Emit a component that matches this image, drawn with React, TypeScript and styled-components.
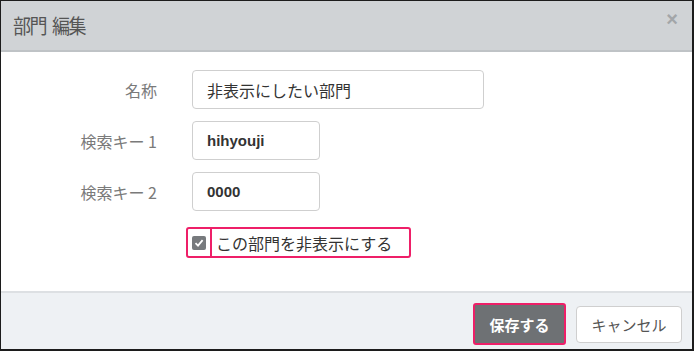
import styled, { createGlobalStyle } from "styled-components";

const GlobalStyle = createGlobalStyle`
  html, body {
    margin: 0;
    padding: 0;
    background: #ffffff;
  }
  body {
    font-family: "Noto Sans CJK JP", "Liberation Sans", sans-serif;
  }
`;

const fields = [
  { label: "名称", value: "非表示にしたい部門", wide: true },
  { label: "検索キー 1", value: "hihyouji", wide: false },
  { label: "検索キー 2", value: "0000", wide: false },
];

const App: React.FC = () => {
  return (
    <>
      <GlobalStyle />
      <Dialog>
        <Header>
          <Title>
            <span>部門</span>
            <span>編集</span>
          </Title>
          <Close>×</Close>
        </Header>
        <Body>
          <Form>
            {fields.map((f) => (
              <Row key={f.label}>
                <Label>{f.label}</Label>
                <Input $wide={f.wide} $latin={!f.wide}>
                  {f.value}
                </Input>
              </Row>
            ))}
            <Row>
              <span />
              <CheckRow>
                <CheckCell>
                  <CheckBox>
                    <svg width="10" height="10" viewBox="0 0 10 10">
                      <path
                        d="M1.5 5.2 L4 7.6 L8.6 2.2"
                        fill="none"
                        stroke="#fff"
                        strokeWidth="1.8"
                      />
                    </svg>
                  </CheckBox>
                </CheckCell>
                <CheckLabel>この部門を非表示にする</CheckLabel>
              </CheckRow>
            </Row>
          </Form>
        </Body>
        <Footer>
          <SaveButton>保存する</SaveButton>
          <CancelButton>キャンセル</CancelButton>
        </Footer>
      </Dialog>
    </>
  );
};

export default App;

const Dialog = styled.div`
  box-sizing: border-box;
  width: 694px;
  height: 351px;
  border: 1px solid #1c1c1c;
  border-right-width: 2px;
  border-bottom-width: 2px;
  display: flex;
  flex-direction: column;
  background: #fff;
`;

const Header = styled.div`
  box-sizing: border-box;
  height: 51px;
  background: #d0d3d6;
  border-bottom: 2px solid #bfc3c6;
  display: flex;
  align-items: center;
  justify-content: space-between;
  padding: 0 14px 2px 12px;
`;

const Title = styled.div`
  display: flex;
  gap: 6px;
  font-size: 18px;
  color: #555;
  letter-spacing: -1.5px;
  transform: scaleY(1.12);
`;

const Close = styled.div`
  font-family: "Liberation Sans", sans-serif;
  font-size: 20px;
  font-weight: bold;
  color: #a3a6a9;
  margin-top: -10px;
`;

const Body = styled.div`
  flex: 1;
  padding-top: 18px;
`;

const Form = styled.div`
  display: flex;
  flex-direction: column;
  gap: 12px;
`;

const Row = styled.div`
  display: grid;
  grid-template-columns: 156px 1fr;
  column-gap: 35px;
  align-items: center;
`;

const Label = styled.div`
  text-align: right;
  font-size: 16px;
  color: #7a7a7a;
  white-space: nowrap;
`;

const Input = styled.div<{ $wide: boolean; $latin: boolean }>`
  box-sizing: border-box;
  width: ${(p) => (p.$wide ? "292px" : "128px")};
  height: 39px;
  border: 1px solid #cfcfcf;
  border-radius: 4px;
  padding: 0 14px;
  display: flex;
  align-items: center;
  font-size: ${(p) => (p.$latin ? "15px" : "16px")};
  color: #333;
  font-family: ${(p) =>
    p.$latin
      ? `"Liberation Sans", "Noto Sans CJK JP", sans-serif`
      : `"Noto Sans CJK JP", sans-serif`};
  font-weight: ${(p) => (p.$latin ? 600 : 400)};
`;

const CheckRow = styled.div`
  margin-left: -6px;
  margin-top: 4px;
  box-sizing: border-box;
  width: 225px;
  height: 31px;
  border: 2px solid #ee1f68;
  border-radius: 3px;
  display: flex;
  align-items: stretch;
`;

const CheckCell = styled.div`
  width: 22px;
  border-right: 2px solid #ee1f68;
  display: flex;
  align-items: center;
  justify-content: center;
`;

const CheckBox = styled.div`
  width: 14px;
  height: 14px;
  border-radius: 2px;
  background: #777a7d;
  display: flex;
  align-items: center;
  justify-content: center;
`;

const CheckLabel = styled.div`
  font-size: 16px;
  color: #333;
  padding-left: 4px;
  display: flex;
  align-items: center;
`;

const Footer = styled.div`
  box-sizing: border-box;
  height: 58px;
  background: #eef1f4;
  border-top: 2px solid #dde0e3;
  display: flex;
  align-items: center;
  justify-content: flex-end;
  gap: 10px;
  padding: 6px 10px 0 0;
`;

const SaveButton = styled.div`
  box-sizing: border-box;
  width: 93px;
  height: 42px;
  border: 2px solid #ee1f68;
  border-radius: 3px;
  background: #6e7174;
  color: #fff;
  font-weight: bold;
  font-size: 15px;
  display: flex;
  align-items: center;
  justify-content: center;
`;

const CancelButton = styled.div`
  box-sizing: border-box;
  width: 106px;
  height: 37px;
  border: 1px solid #cfcfcf;
  border-radius: 4px;
  background: #fff;
  color: #555;
  font-size: 15px;
  display: flex;
  align-items: center;
  justify-content: center;
`;
